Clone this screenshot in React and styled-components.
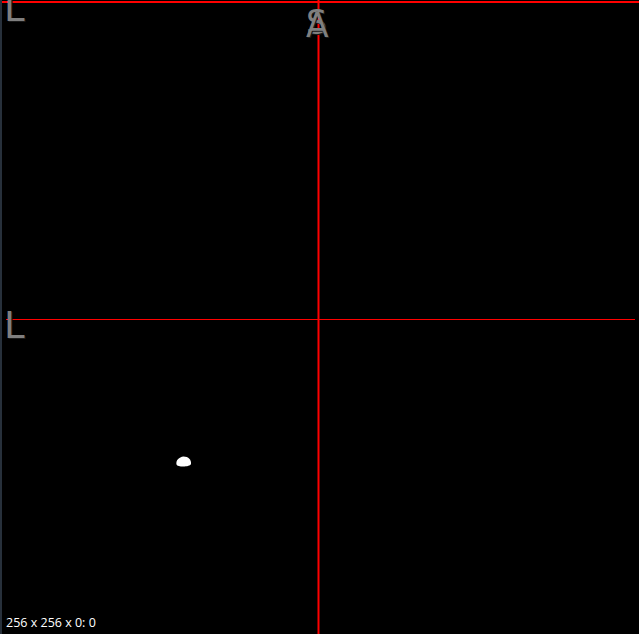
import React from "react";
import styled, { createGlobalStyle } from "styled-components";

const GlobalStyle = createGlobalStyle`
  html, body {
    margin: 0;
    padding: 0;
    background: #000;
    overflow: hidden;
  }
  #root {
    width: 639px;
    height: 634px;
  }
`;

const Viewer = styled.div`
  position: relative;
  display: flex;
  flex-direction: column;
  justify-content: flex-end;
  width: 639px;
  height: 634px;
  padding: 0 0 3px 4px;
  background: #000;
  border-left: 2px solid #27303b;
  box-sizing: border-box;
  overflow: hidden;
  font-family: "Open Sans", "Liberation Sans", sans-serif;
`;

const Overlay = styled.svg`
  position: absolute;
  left: 0;
  top: 0;
`;

const OrientLabel = styled.span`
  position: absolute;
  left: ${(p) => p.x}px;
  top: ${(p) => p.y}px;
  font-family: "DejaVu Sans", "Liberation Sans", sans-serif;
  font-size: ${(p) => p.size}px;
  line-height: 1;
  color: #7f7f7f;
  text-shadow: 1px 1px 0 #1a1a1a;
  user-select: none;
`;

const Status = styled.div`
  position: relative;
  font-size: 12.5px;
  color: #fff;
`;

function Crosshair() {
  return (
    <Overlay width="637" height="634" viewBox="0 0 637 634">
      <rect x="0" y="1" width="637" height="2" fill="#ff0000" />
      <rect x="4" y="319" width="629" height="1" fill="#ff0000" />
      <rect x="315.5" y="0" width="2" height="634" fill="#ff0000" />
      <path
        d="M174.5 464.5 C173.5 460.5 177 457 181.5 456.5 C186.5 456.5 189.5 460 189 464 C188.5 467 175.5 467.5 174.5 464.5 Z"
        fill="#fff"
      />
    </Overlay>
  );
}

export default function App() {
  return (
    <>
      <GlobalStyle />
      <Viewer>
        <Crosshair />
        <OrientLabel x={2} y={-10} size={37}>L</OrientLabel>
        <OrientLabel x={2} y={307} size={37}>L</OrientLabel>
        <OrientLabel x={304} y={6} size={33}>S</OrientLabel>
        <OrientLabel x={304} y={9} size={33}>A</OrientLabel>
        <Status>256 x 256 x 0: 0</Status>
      </Viewer>
    </>
  );
}
